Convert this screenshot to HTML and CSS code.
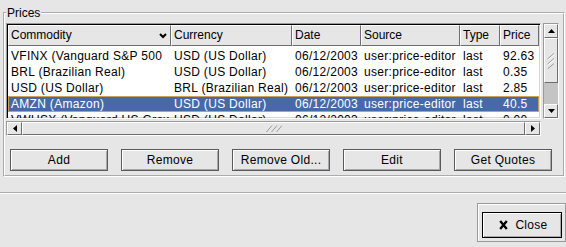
FILE: index.html
```html
<!DOCTYPE html>
<html lang="en">
<head>
  <meta charset="UTF-8" />
  <title>Prices</title>
  <link rel="stylesheet" href="styles.css">
</head>
<body>

  <!-- Prices frame -->
  <fieldset class="frame">
    <legend>Prices</legend>

    <div class="list-area">
      <div class="clist">
        <div class="clist-head">
          <div class="col-btn">
            <span>Commodity</span>
            <svg class="sort" width="8" height="6" viewBox="0 0 8 6"><polyline points="1,1 4,4 7,1" fill="none" stroke="#000" stroke-width="2"/></svg>
          </div>
          <div class="col-btn">Currency</div>
          <div class="col-btn">Date</div>
          <div class="col-btn">Source</div>
          <div class="col-btn">Type</div>
          <div class="col-btn">Price</div>
        </div>

        <div class="clist-body">
          <div class="row">
            <div class="cell">VFINX (Vanguard S&amp;P 500</div>
            <div class="cell">USD (US Dollar)</div>
            <div class="cell">06/12/2003</div>
            <div class="cell">user:price-editor</div>
            <div class="cell">last</div>
            <div class="cell">92.63</div>
          </div>
          <div class="row">
            <div class="cell">BRL (Brazilian Real)</div>
            <div class="cell">USD (US Dollar)</div>
            <div class="cell">06/12/2003</div>
            <div class="cell">user:price-editor</div>
            <div class="cell">last</div>
            <div class="cell">0.35</div>
          </div>
          <div class="row">
            <div class="cell">USD (US Dollar)</div>
            <div class="cell">BRL (Brazilian Real)</div>
            <div class="cell">06/12/2003</div>
            <div class="cell">user:price-editor</div>
            <div class="cell">last</div>
            <div class="cell">2.85</div>
          </div>
          <div class="row selected">
            <div class="cell">AMZN (Amazon)</div>
            <div class="cell">USD (US Dollar)</div>
            <div class="cell">06/12/2003</div>
            <div class="cell">user:price-editor</div>
            <div class="cell">last</div>
            <div class="cell">40.5</div>
          </div>
          <div class="row">
            <div class="cell">VWUSX (Vanguard US Growth</div>
            <div class="cell">USD (US Dollar)</div>
            <div class="cell">06/12/2003</div>
            <div class="cell">user:price-editor</div>
            <div class="cell">last</div>
            <div class="cell">0.00</div>
          </div>
        </div>
      </div>

      <!-- vertical scrollbar -->
      <div class="vscroll">
        <div class="sb-btn">
          <svg width="7" height="4" viewBox="0 0 7 4"><polygon points="0,4 3.5,0 7,4" fill="#000"/></svg>
        </div>
        <div class="vthumb">
          <svg width="8" height="16" viewBox="0 0 8 16">
            <path d="M0.5 6 L7 0.5 M0.5 11 L7 5.5 M0.5 16 L7 10.5" stroke="#9a9a9a" fill="none"/>
            <path d="M1.5 6.5 L7.5 1.5 M1.5 11.5 L7.5 6.5" stroke="#fff" fill="none"/>
          </svg>
        </div>
        <div class="trough"></div>
        <div class="sb-btn">
          <svg width="7" height="4" viewBox="0 0 7 4"><polygon points="0,0 3.5,4 7,0" fill="#000"/></svg>
        </div>
      </div>

      <!-- horizontal scrollbar -->
      <div class="hscroll">
        <div class="sb-btn">
          <svg width="4" height="7" viewBox="0 0 4 7"><polygon points="4,0 0,3.5 4,7" fill="#000"/></svg>
        </div>
        <div class="hthumb">
          <svg width="16" height="7" viewBox="0 0 16 7">
            <path d="M0.5 7 L6 0.5 M5.5 7 L11 0.5 M10.5 7 L16 0.5" stroke="#9a9a9a" fill="none"/>
          </svg>
        </div>
        <div class="trough"></div>
        <div class="sb-btn">
          <svg width="4" height="7" viewBox="0 0 4 7"><polygon points="0,0 4,3.5 0,7" fill="#000"/></svg>
        </div>
      </div>
    </div>

    <div class="buttons">
      <button class="btn">Add</button>
      <button class="btn">Remove</button>
      <button class="btn">Remove Old...</button>
      <button class="btn">Edit</button>
      <button class="btn">Get Quotes</button>
    </div>
  </fieldset>

  <div class="separator"></div>

  <div class="action-row">
    <div class="default-frame">
      <button class="btn close-btn">
        <svg class="close-icon" width="9" height="10" viewBox="0 0 9 10">
          <path d="M1.2 1 L7.8 9 M7.8 1 L1.2 9" stroke="#000" stroke-width="2.3" fill="none"/>
        </svg>
        <span>Close</span>
      </button>
    </div>
  </div>

</body>
</html>
```

FILE: styles.css
```css
* {
  box-sizing: border-box;
}

body {
  margin: 0;
  width: 566px;
  height: 247px;
  overflow: hidden;
  background-color: #e6e6e6;
  color: #000;
  font-family: "Liberation Sans", Arial, sans-serif;
  font-size: 12px;
}

/* Frame */
.frame {
  margin: 6px 1px 0 3px;
  padding: 3px 3px 4px 1px;
  border: 2px groove #fff;
  min-width: 0;
}

.frame legend {
  padding: 0 1px;
  line-height: 14px;
  font-size: 12px;
}

.list-area {
  display: grid;
  grid-template-columns: 535px 16px;
  grid-template-rows: 96px 15px;
  column-gap: 2px;
  row-gap: 2px;
}

/* Column list */
.clist {
  padding: 1px;
  background-color: #fff;
  border: 1px solid;
  border-color: #9a9a9a #fff #fff #9a9a9a;
  box-shadow: inset 1px 1px 0 #000, inset -1px -1px 0 #d6d6d6;
  overflow: hidden;
}

.clist-head,
.row {
  display: grid;
  grid-template-columns: 163px 121px 69px 99px 40px 39px;
}

.clist-head {
  margin-bottom: 2px;
}

.col-btn {
  height: 21px;
  line-height: 19px;
  padding: 0 3px 0 2px;
  background-color: #e6e6e6;
  border: 1px solid;
  border-color: #fff #6e6e6e #6e6e6e #fff;
  display: flex;
  justify-content: space-between;
  align-items: center;
  white-space: nowrap;
  overflow: hidden;
}

.row {
  height: 16px;
  line-height: 16px;
}

.cell {
  padding-left: 3px;
  letter-spacing: 0.3px;
  white-space: nowrap;
  overflow: hidden;
}

.row.selected {
  background-color: #4868a8;
  color: #fff;
  box-shadow: inset 0 0 0 1px #c9a05a;
}

/* Scrollbars */
.vscroll,
.hscroll {
  display: flex;
  background-color: #c4c4c4;
  border: 1px solid;
  border-color: #9a9a9a #fff #fff #9a9a9a;
}

.vscroll {
  flex-direction: column;
}

.sb-btn,
.vthumb,
.hthumb {
  background-color: #e6e6e6;
  border: 1px solid;
  border-color: #fff #6e6e6e #6e6e6e #fff;
  display: flex;
  align-items: center;
  justify-content: center;
}

.vscroll .sb-btn {
  height: 14px;
}

.hscroll .sb-btn {
  width: 15px;
}

.vthumb {
  height: 45px;
}

.hthumb {
  width: 503px;
}

.trough {
  flex: 1;
}

/* Buttons */
.buttons {
  display: flex;
  gap: 13px;
  margin: 13px 0 0 4px;
}

.btn {
  width: 98px;
  height: 22px;
  padding: 0;
  font-family: "Liberation Sans", Arial, sans-serif;
  font-size: 12px;
  letter-spacing: 0.3px;
  color: #000;
  background-color: #e6e6e6;
  border: 1px solid #5a5a5a;
  box-shadow: inset 1px 1px 0 #fff, inset -1px -1px 0 #a8a8a8;
}

.separator {
  margin-top: 15px;
  border-top: 1px solid #ababab;
  border-bottom: 1px solid #fff;
}

.action-row {
  display: flex;
  justify-content: flex-end;
  margin-top: 9px;
}

.default-frame {
  width: 89px;
  padding: 8px 2px 3px 4px;
  border: 1px solid #9a9a9a;
  box-shadow: inset 1px 1px 0 #fff;
}

.close-btn {
  width: 80px;
  height: 26px;
  border-color: #000;
  display: flex;
  align-items: center;
  justify-content: center;
  gap: 7px;
  padding-left: 3px;
}
```
